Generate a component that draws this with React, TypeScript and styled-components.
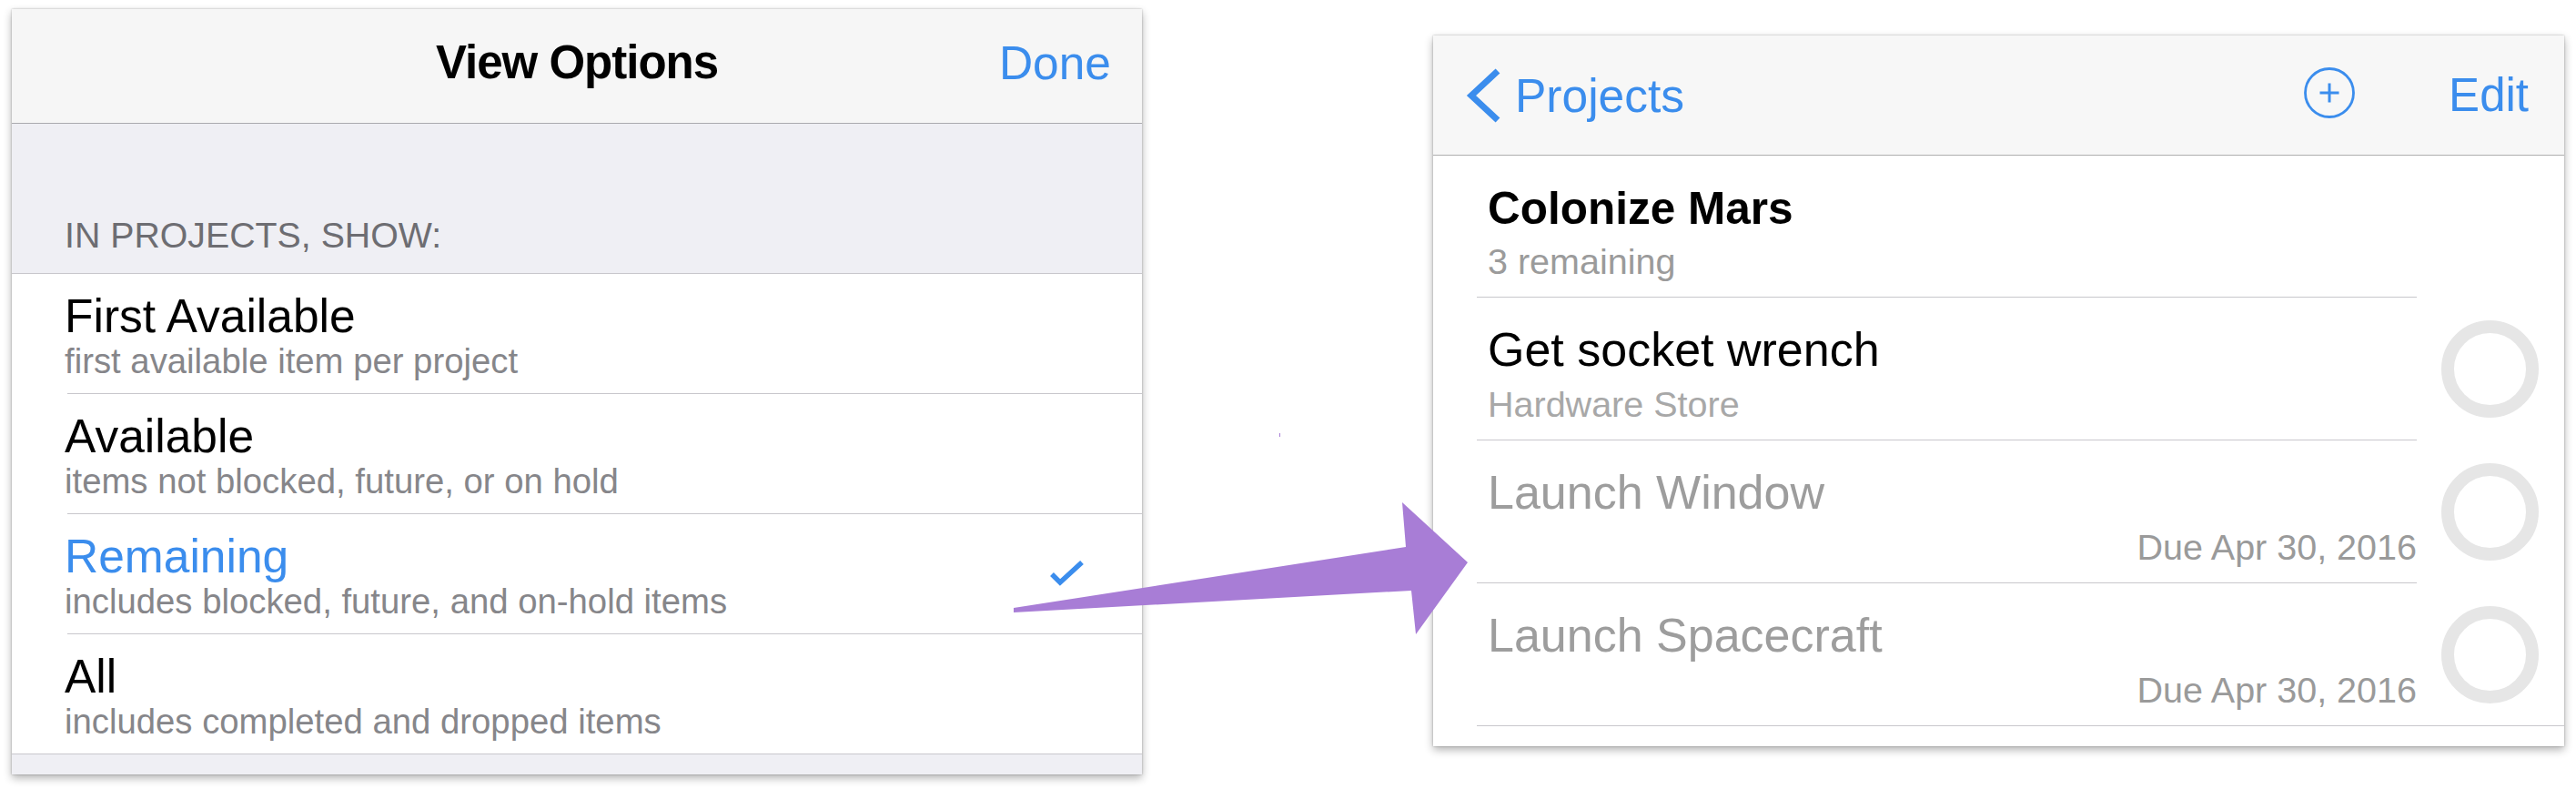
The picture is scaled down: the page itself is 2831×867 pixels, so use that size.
import React from "react";
import styled, { createGlobalStyle } from "styled-components";

const BLUE = "#3b8ded";
const SEP = "#c8c7cc";
const FONT = `"Liberation Sans", Arial, Helvetica, sans-serif`;

const GlobalStyle = createGlobalStyle`
  html, body {
    margin: 0;
    padding: 0;
    background: #ffffff;
  }
  body {
    font-family: ${FONT};
    -webkit-font-smoothing: antialiased;
  }
  #root {
    width: 2831px;
    height: 867px;
    overflow: hidden;
  }
`;

const Stage = styled.div`
  position: relative;
  width: 2831px;
  height: 867px;
  box-sizing: border-box;
  display: flex;
  align-items: flex-start;
  padding-left: 13px;
  gap: 320px;
`;

const Panel = styled.section<{ $top: number; $width: number; $pad?: number }>`
  margin-top: ${(p) => p.$top}px;
  width: ${(p) => p.$width}px;
  padding-bottom: ${(p) => p.$pad ?? 0}px;
  background: #ffffff;
  display: flex;
  flex-direction: column;
  box-shadow: 0 4px 9px rgba(0, 0, 0, 0.3), 0 0 2px rgba(0, 0, 0, 0.28);
`;

/* ---------- Left panel: View Options ---------- */

const ModalNav = styled.header`
  height: 126px;
  box-sizing: border-box;
  background: #f6f6f6;
  border-bottom: 1px solid #aaaaae;
  display: grid;
  grid-template-columns: 1fr auto 1fr;
  align-items: start;
  padding: 33px 34px 0 34px;
`;

const ModalTitle = styled.h1`
  grid-column: 2;
  margin: 0;
  font-size: 51px;
  line-height: 52px;
  font-weight: 700;
  letter-spacing: -1px;
  color: #000000;
`;

const DoneButton = styled.span`
  grid-column: 3;
  justify-self: end;
  font-size: 51.5px;
  line-height: 52px;
  color: ${BLUE};
`;

const SectionHeader = styled.div`
  background: #efeff4;
  padding: 102px 0 22px 58px;
  border-bottom: 1px solid ${SEP};
  font-size: 39.3px;
  line-height: 40px;
  color: #6d6d72;
  text-transform: uppercase;
`;

const OptionRow = styled.div<{ $last?: boolean }>`
  position: relative;
  display: flex;
  align-items: center;
  padding: 18px 62px 14px 58px;
  &::after {
    content: "";
    position: absolute;
    left: ${(p) => (p.$last ? 0 : 61)}px;
    right: 0;
    bottom: 0;
    height: 1px;
    background: ${SEP};
  }
`;

const OptionText = styled.div`
  flex: 1;
  display: flex;
  flex-direction: column;
`;

const OptionTitle = styled.div<{ $selected?: boolean }>`
  font-size: 51.5px;
  line-height: 56px;
  color: ${(p) => (p.$selected ? BLUE : "#000000")};
`;

const OptionSub = styled.div`
  font-size: 38.3px;
  line-height: 44px;
  color: #86868a;
`;

const CheckMark = styled.svg`
  width: 42px;
  height: 34px;
  margin-bottom: 6px;
  flex: none;
`;

const Footer = styled.div`
  height: 22px;
  background: #efeff4;
`;

/* ---------- Right panel: Project ---------- */

const ProjectNav = styled.header`
  height: 132px;
  box-sizing: border-box;
  background: #f7f7f7;
  border-bottom: 1px solid #afafaf;
  display: flex;
  align-items: center;
  padding: 0 39px 0 35px;
`;

const BackButton = styled.div`
  display: flex;
  align-items: center;
  gap: 13px;
  color: ${BLUE};
  font-size: 51.5px;
  line-height: 56px;
`;

const NavSpacer = styled.div`
  flex: 1;
`;

const AddButton = styled.svg`
  width: 60px;
  height: 60px;
  margin-bottom: 5px;
  margin-right: 101px;
  flex: none;
`;

const EditButton = styled.span`
  color: ${BLUE};
  font-size: 51px;
  line-height: 56px;
`;

const ListRow = styled.div<{ $last?: boolean; $project?: boolean }>`
  position: relative;
  display: flex;
  align-items: center;
  padding: ${(p) => (p.$project ? "30px 162px 18px 60px" : "29px 28px 18px 60px")};
  &::after {
    content: "";
    position: absolute;
    left: 48px;
    right: ${(p) => (p.$last ? 0 : 162)}px;
    bottom: 0;
    height: 1px;
    background: ${SEP};
  }
`;

const RowText = styled.div`
  flex: 1;
  display: flex;
  flex-direction: column;
  margin-right: 27px;
`;

const ProjectTitle = styled.div`
  font-size: 49.5px;
  line-height: 56px;
  font-weight: 700;
  color: #000000;
`;

const ProjectSub = styled.div`
  margin-top: 8px;
  font-size: 39.5px;
  line-height: 44px;
  color: #9b9b9b;
`;

const TaskTitle = styled.div<{ $dim?: boolean }>`
  font-size: 52px;
  line-height: 56px;
  color: ${(p) => (p.$dim ? "#9d9d9d" : "#000000")};
`;

const TaskMeta = styled.div<{ $right?: boolean }>`
  margin-top: 10px;
  font-size: 39.5px;
  line-height: 44px;
  height: 44px;
  white-space: nowrap;
  text-align: ${(p) => (p.$right ? "right" : "left")};
  color: ${(p) => (p.$right ? "#9a9a9a" : "#a8a8a8")};
`;

const StatusCircle = styled.div`
  width: 107px;
  height: 107px;
  box-sizing: border-box;
  border: 14px solid #e6e6e6;
  border-radius: 50%;
  margin-top: -11px;
  flex: none;
`;

const ArrowLayer = styled.svg`
  position: absolute;
  left: 0;
  top: 0;
  width: 2831px;
  height: 867px;
  pointer-events: none;
`;

const options = [
  { title: "First Available", sub: "first available item per project" },
  { title: "Available", sub: "items not blocked, future, or on hold" },
  { title: "Remaining", sub: "includes blocked, future, and on-hold items", selected: true },
  { title: "All", sub: "includes completed and dropped items" },
];

const tasks = [
  { title: "Get socket wrench", meta: "Hardware Store", dim: false, due: false },
  { title: "Launch Window", meta: "Due Apr 30, 2016", dim: true, due: true },
  { title: "Launch Spacecraft", meta: "Due Apr 30, 2016", dim: true, due: true },
];

export default function App() {
  return (
    <>
      <GlobalStyle />
      <Stage>
        <Panel $top={10} $width={1242}>
          <ModalNav>
            <ModalTitle>View Options</ModalTitle>
            <DoneButton>Done</DoneButton>
          </ModalNav>
          <SectionHeader>In Projects, Show:</SectionHeader>
          {options.map((o, i) => (
            <OptionRow key={o.title} $last={i === options.length - 1}>
              <OptionText>
                <OptionTitle $selected={o.selected}>{o.title}</OptionTitle>
                <OptionSub>{o.sub}</OptionSub>
              </OptionText>
              {o.selected && (
                <CheckMark viewBox="0 0 42 34">
                  <polyline
                    points="5,18 14,27 38,5"
                    fill="none"
                    stroke={BLUE}
                    strokeWidth="5.5"
                    strokeLinecap="butt"
                    strokeLinejoin="miter"
                  />
                </CheckMark>
              )}
            </OptionRow>
          ))}
          <Footer />
        </Panel>

        <Panel $top={39} $width={1243} $pad={22}>
          <ProjectNav>
            <BackButton>
              <svg width="42" height="66" viewBox="0 0 42 66">
                <polyline
                  points="36,6 7,33 36,60"
                  fill="none"
                  stroke={BLUE}
                  strokeWidth="7"
                  strokeLinecap="butt"
                  strokeLinejoin="miter"
                />
              </svg>
              <span>Projects</span>
            </BackButton>
            <NavSpacer />
            <AddButton viewBox="0 0 60 60">
              <circle cx="30" cy="30" r="26.5" fill="none" stroke={BLUE} strokeWidth="2.8" />
              <line x1="19.5" y1="30" x2="40.5" y2="30" stroke={BLUE} strokeWidth="3" />
              <line x1="30" y1="19.5" x2="30" y2="40.5" stroke={BLUE} strokeWidth="3" />
            </AddButton>
            <EditButton>Edit</EditButton>
          </ProjectNav>

          <ListRow $project>
            <RowText>
              <ProjectTitle>Colonize Mars</ProjectTitle>
              <ProjectSub>3 remaining</ProjectSub>
            </RowText>
          </ListRow>

          {tasks.map((t, i) => (
            <ListRow key={t.title} $last={i === tasks.length - 1}>
              <RowText>
                <TaskTitle $dim={t.dim}>{t.title}</TaskTitle>
                <TaskMeta $right={t.due}>{t.meta}</TaskMeta>
              </RowText>
              <StatusCircle />
            </ListRow>
          ))}
        </Panel>

        <ArrowLayer viewBox="0 0 2831 867">
          <polygon
            points="1114,668 1545,601 1541,552 1613,618 1556,697 1551,649 1114,673"
            fill="#a87dd6"
          />
          <rect x="1406" y="476" width="1" height="4" fill="#a87dd6" />
        </ArrowLayer>
      </Stage>
    </>
  );
}
